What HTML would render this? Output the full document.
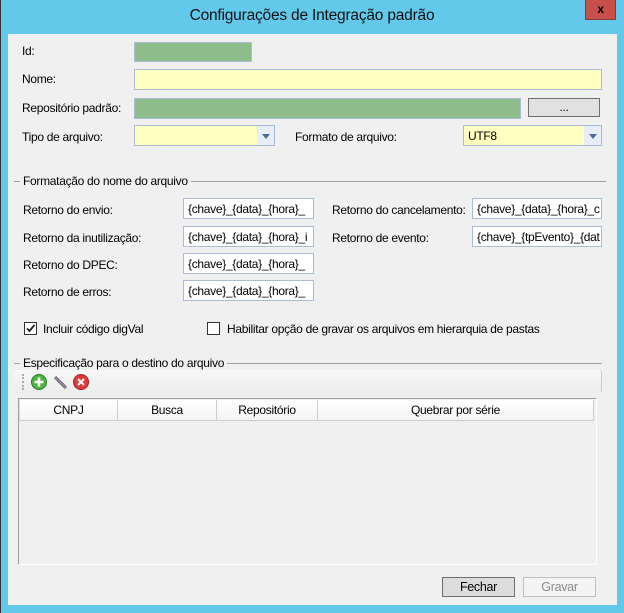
<!DOCTYPE html>
<html><head><meta charset="utf-8"><style>
*{box-sizing:border-box;margin:0;padding:0}
body{width:624px;height:613px;background:#63c9ea;font-family:"Liberation Sans",sans-serif;font-size:12px;color:#000;position:relative;overflow:hidden;letter-spacing:-0.3px}
.a{position:absolute}
.title{left:0;top:0;width:624px;height:34px;text-align:center;line-height:32px;font-size:15.5px;color:#111;letter-spacing:-0.2px}
.close{left:585px;top:0;width:31px;height:20px;background:#c7504c;border:1px solid #8a3a36;border-top:none;color:#000;font-weight:bold;text-align:center;line-height:18px;font-size:12px}
.client{left:8px;top:34px;width:609px;height:571px;background:#f0f0f0}
.tb{border:1px solid #a9bcd6;background:#fff;height:21px;padding:3px 0 0 4px;white-space:nowrap;overflow:hidden}
.g{background:#8fbc8b}
.y{background:#ffffc0}
.lab{white-space:nowrap}
.dd{position:absolute;right:0;top:0;width:17px;height:100%;background:#e8eef7}
.dd:after{content:"";position:absolute;left:5px;top:8px;border-left:4px solid transparent;border-right:4px solid transparent;border-top:5px solid #4a6a9a}
.gl{height:1px;background:#a0a0a0}
.cb{width:13px;height:13px;border:1px solid #333;background:#fff}
.btn{border:1px solid #adadad;background:#e1e1e1;text-align:center;line-height:18px}
.hd{top:400px;height:21px;background:#fff;border-right:1px solid #ccc;border-bottom:1px solid #ccc;text-align:center;line-height:20px;background:linear-gradient(#fff,#f4f4f4)}
</style></head><body>
<div class="a" style="left:0;top:0;width:1px;height:613px;background:#333"></div>
<div class="a title">Configurações de Integração padrão</div>
<div class="a close">x</div>
<div class="a client"></div>

<div class="a lab" style="left:22px;top:44px">Id:</div>
<div class="a tb g" style="left:134px;top:42px;width:118px;height:20px"></div>
<div class="a lab" style="left:22px;top:72px">Nome:</div>
<div class="a tb y" style="left:134px;top:69px;width:468px;height:21px"></div>
<div class="a lab" style="left:22px;top:101px">Repositório padrão:</div>
<div class="a tb g" style="left:134px;top:98px;width:387px;height:21px"></div>
<div class="a btn" style="left:528px;top:98px;width:72px;height:19px;border-color:#707070;line-height:16px">...</div>
<div class="a lab" style="left:22px;top:130px">Tipo de arquivo:</div>
<div class="a tb y" style="left:134px;top:125px;width:141px;height:21px"><span class="dd"></span></div>
<div class="a lab" style="left:295px;top:130px">Formato de arquivo:</div>
<div class="a tb y" style="left:463px;top:125px;width:139px;height:21px">UTF8<span class="dd"></span></div>

<div class="a gl" style="left:14px;top:181px;width:592px"></div>
<div class="a lab" style="left:20px;top:174px;background:#f0f0f0;padding:0 3px">Formatação do nome do arquivo</div>

<div class="a lab" style="left:23px;top:203px">Retorno do envio:</div>
<div class="a tb" style="left:183px;top:198px;width:131px">{chave}_{data}_{hora}_</div>
<div class="a lab" style="left:23px;top:231px">Retorno da inutilização:</div>
<div class="a tb" style="left:183px;top:226px;width:131px">{chave}_{data}_{hora}_i</div>
<div class="a lab" style="left:23px;top:258px">Retorno do DPEC:</div>
<div class="a tb" style="left:183px;top:253px;width:131px">{chave}_{data}_{hora}_</div>
<div class="a lab" style="left:23px;top:285px">Retorno de erros:</div>
<div class="a tb" style="left:183px;top:280px;width:131px">{chave}_{data}_{hora}_</div>
<div class="a lab" style="left:332px;top:203px">Retorno do cancelamento:</div>
<div class="a tb" style="left:472px;top:198px;width:130px">{chave}_{data}_{hora}_c</div>
<div class="a lab" style="left:332px;top:231px">Retorno de evento:</div>
<div class="a tb" style="left:472px;top:226px;width:130px">{chave}_{tpEvento}_{dat</div>

<div class="a cb" style="left:24px;top:322px"><svg width="11" height="11" viewBox="0 0 11 11" style="position:absolute;left:0;top:0"><path d="M2 5.5l2.5 2.5 5-6" stroke="#222" stroke-width="1.8" fill="none"/></svg></div>
<div class="a lab" style="left:43px;top:322px">Incluir código digVal</div>
<div class="a cb" style="left:207px;top:322px"></div>
<div class="a lab" style="left:227px;top:322px">Habilitar opção de gravar os arquivos em hierarquia de pastas</div>

<div class="a gl" style="left:14px;top:363px;width:588px"></div>
<div class="a lab" style="left:20px;top:356px;background:#f0f0f0;padding:0 3px">Especificação para o destino do arquivo</div>
<div class="a" style="left:14px;top:370px;width:588px;height:23px;background:linear-gradient(#f8f8f8,#ececec);border-radius:3px;border-right:1px solid #ccc"></div>
<div class="a" style="left:22px;top:374px;width:2px;height:16px;border-left:2px dotted #aaa"></div>
<svg class="a" style="left:30px;top:373px" width="60" height="18" viewBox="0 0 60 18">
<circle cx="9" cy="9" r="7.5" fill="#4eb443" stroke="#2d7a28"/><path d="M9 4.5v9M4.5 9h9" stroke="#fff" stroke-width="2.6"/>
<path d="M25 4l11 11" stroke="#556" stroke-width="3"/><path d="M25 4l11 11" stroke="#aab" stroke-width="1"/>
<circle cx="51" cy="9" r="7.5" fill="#e03a3a" stroke="#a02020"/><path d="M48 6l6 6M54 6l-6 6" stroke="#fff" stroke-width="2"/>
</svg>

<div class="a" style="left:18px;top:398px;width:579px;height:167px;border:1px solid #a0a0a0;border-right-color:#fff;border-bottom-color:#fff;background:#f0f0f0"></div>
<div class="a hd" style="left:19px;width:99px;border-left:1px solid #ddd">CNPJ</div>
<div class="a hd" style="left:118px;width:99px">Busca</div>
<div class="a hd" style="left:217px;width:101px">Repositório</div>
<div class="a hd" style="left:318px;width:276px">Quebrar por série</div>

<div class="a btn" style="left:442px;top:577px;width:73px;height:20px;border-color:#707070;background:#dcdcdc;font-size:12.5px">Fechar</div>
<div class="a btn" style="left:523px;top:577px;width:73px;height:20px;background:#f4f4f4;border-color:#c0c0c0;color:#8a8a8a;font-size:12.5px">Gravar</div>
</body></html>
